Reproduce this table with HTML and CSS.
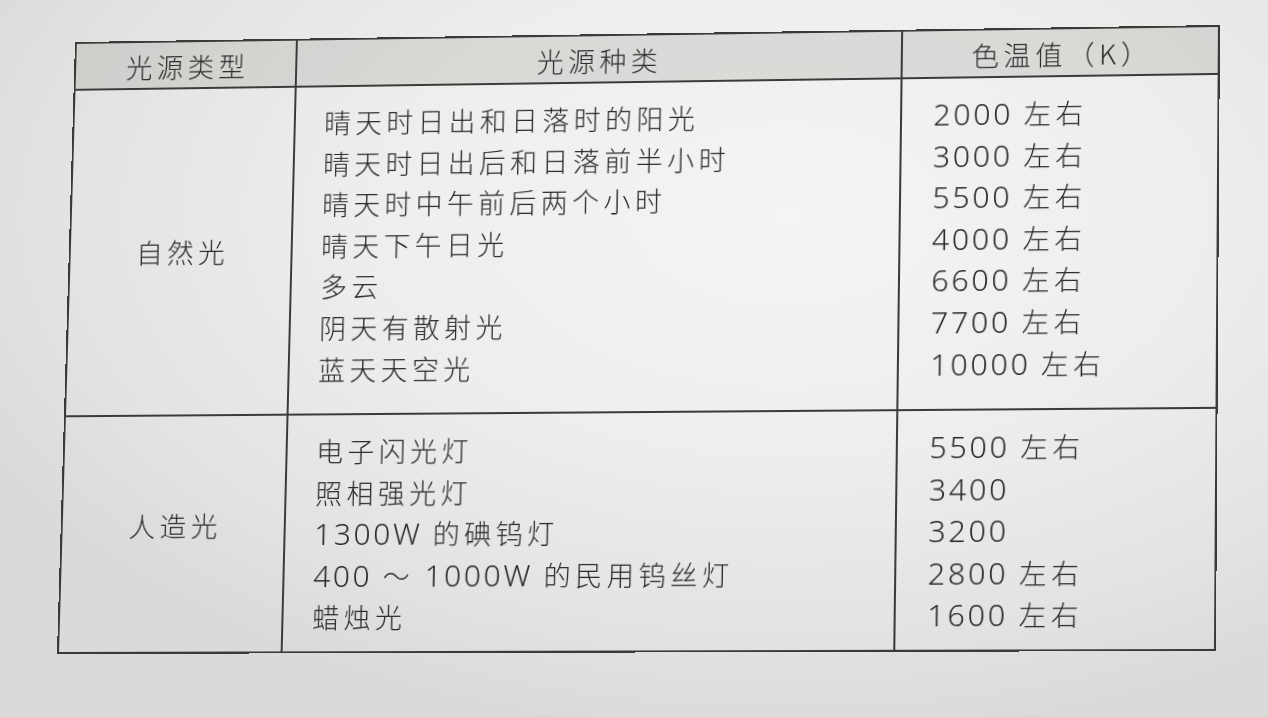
FILE: index.html
```html
<!DOCTYPE html>
<html lang="zh-CN">
<head>
<meta charset="utf-8">
<title>光源色温表</title>
<link rel="stylesheet" href="styles.css">
</head>
<body>
<div class="sheet">
  <div class="cell head">光源类型</div>
  <div class="cell head">光源种类</div>
  <div class="cell head last">色温值（K）</div>

  <div class="cell type">自然光</div>
  <div class="cell list">
    <div class="line">晴天时日出和日落时的阳光</div>
    <div class="line">晴天时日出后和日落前半小时</div>
    <div class="line">晴天时中午前后两个小时</div>
    <div class="line">晴天下午日光</div>
    <div class="line">多云</div>
    <div class="line">阴天有散射光</div>
    <div class="line">蓝天天空光</div>
  </div>
  <div class="cell list vals last">
    <div class="line"><span class="num">2000</span> 左右</div>
    <div class="line"><span class="num">3000</span> 左右</div>
    <div class="line"><span class="num">5500</span> 左右</div>
    <div class="line"><span class="num">4000</span> 左右</div>
    <div class="line"><span class="num">6600</span> 左右</div>
    <div class="line"><span class="num">7700</span> 左右</div>
    <div class="line"><span class="num">10000</span> 左右</div>
  </div>

  <div class="cell type type-art bottom">人造光</div>
  <div class="cell list bottom">
    <div class="line">电子闪光灯</div>
    <div class="line">照相强光灯</div>
    <div class="line"><span class="num">1300W</span> 的碘钨灯</div>
    <div class="line"><span class="num">400</span> ～ <span class="num">1000W</span> 的民用钨丝灯</div>
    <div class="line">蜡烛光</div>
  </div>
  <div class="cell list vals last bottom">
    <div class="line"><span class="num">5500</span> 左右</div>
    <div class="line"><span class="num">3400</span></div>
    <div class="line"><span class="num">3200</span></div>
    <div class="line"><span class="num">2800</span> 左右</div>
    <div class="line"><span class="num">1600</span> 左右</div>
  </div>
</div>
</body>
</html>
```

FILE: styles.css
```css
html, body {
  margin: 0;
  padding: 0;
}

body {
  width: 1268px;
  height: 717px;
  overflow: hidden;
  background:
    radial-gradient(ellipse 900px 520px at 62% 30%, #f4f4f2 0%, #eeeeec 45%, #e3e3e1 80%, #dadad8 100%);
  font-family: "Noto Sans CJK SC", "Noto Sans", sans-serif;
  font-weight: 300;
  color: #2a2a2a;
}

.sheet {
  width: 1150px;
  height: 620px;
  box-sizing: border-box;
  border: 2px solid #3a3a3a;
  display: grid;
  grid-template-columns: 226px 609px 1fr;
  grid-template-rows: 48px 332px 1fr;
  transform-origin: 0 0;
  transform: matrix3d(0.971864, -0.015270, 0, -0.0000194983,
                      -0.030150, 0.974273, 0, -0.0000196081,
                      0, 0, 1, 0,
                      75, 42, 0, 1);
}

.cell {
  box-sizing: border-box;
  border-right: 2px solid #3a3a3a;
  border-bottom: 2px solid #3a3a3a;
  font-size: 27px;
  letter-spacing: 4.5px;
}

.cell.last {
  border-right: none;
}

.cell.bottom {
  border-bottom: none;
}

.head {
  background: rgba(110, 110, 105, 0.17);
  display: flex;
  align-items: center;
  justify-content: center;
  text-indent: 4.5px;
  padding-top: 2px;
}

.type {
  display: flex;
  align-items: center;
  justify-content: center;
  text-indent: 4.5px;
}

.type-art {
  padding-bottom: 18px;
}

.list {
  padding: 15px 0 0 29px;
}

.vals {
  padding-left: 31px;
}

.line {
  height: 41.6px;
  line-height: 41.6px;
  white-space: nowrap;
}

.num {
  font-family: "Noto Sans", "Open Sans", sans-serif;
  font-weight: 300;
  font-size: 30px;
  letter-spacing: 2.6px;
}
```
